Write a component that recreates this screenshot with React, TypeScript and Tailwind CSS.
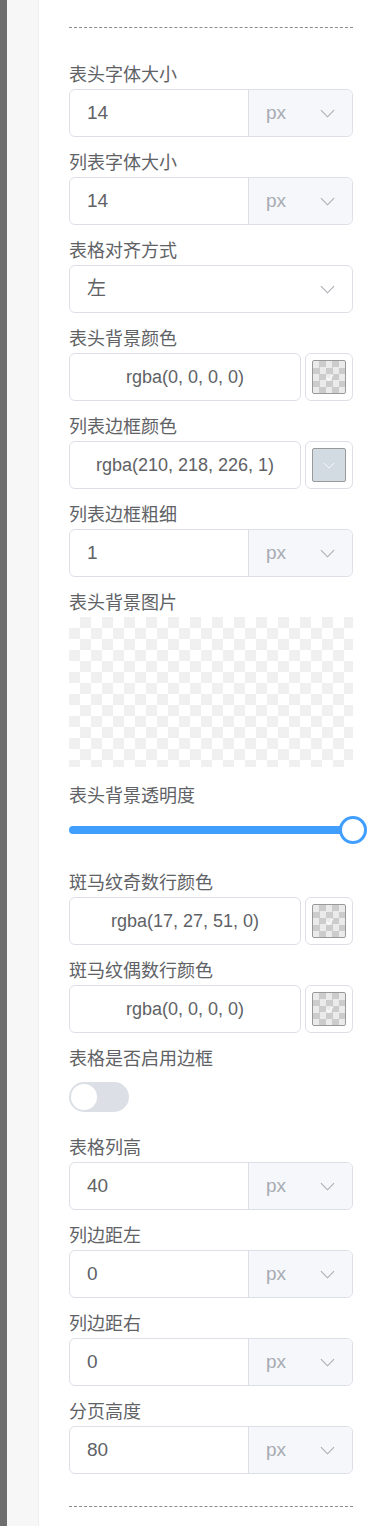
import React from "react";

const font = "font-['Liberation_Sans','Noto_Sans_CJK_SC',sans-serif]";

function Chevron({ className = "" }: { className?: string }) {
  return (
    <svg viewBox="0 0 16 9" className={className} fill="none" stroke="currentColor" strokeWidth="1.1">
      <polyline points="1,1 8,8 15,1" />
    </svg>
  );
}

function Label({ children }: { children: React.ReactNode }) {
  return <div className="h-[22px] leading-[22px] text-[18px] text-[#606266]">{children}</div>;
}

function Field({ label, children, mb = "mb-[15px]" }: { label: string; children: React.ReactNode; mb?: string }) {
  return (
    <div className={mb}>
      <Label>{label}</Label>
      <div className="mt-[3px]">{children}</div>
    </div>
  );
}

function UnitInput({ value }: { value: string }) {
  return (
    <div className="flex h-[48px] rounded-[6px] border border-[#dcdfe6]">
      <div className="w-[179px] flex items-center pl-[17px] text-[19px] text-[#606266] border-r border-[#dcdfe6]">
        {value}
      </div>
      <div className="flex-1 flex items-center justify-between pl-[17px] pr-[17px] bg-[#f5f7fa] rounded-r-[6px] text-[19px] text-[#a8abb2]">
        <span>px</span>
        <Chevron className="w-[15px] h-[9px] text-[#a8abb2]" />
      </div>
    </div>
  );
}

function ColorInput({ value, color }: { value: string; color?: string }) {
  return (
    <div className="flex gap-[4px]">
      <div className="flex-1 h-[48px] rounded-[6px] border border-[#dcdfe6] flex items-center justify-center text-[18px] text-[#606266]">
        {value}
      </div>
      <div className="w-[48px] h-[48px] rounded-[6px] border border-[#dcdfe6] flex items-center justify-center">
        {color ? (
          <div className="w-[34px] h-[34px] rounded-[2px] border border-[#999999] bg-[rgb(210,218,226)] flex items-center justify-center">
            <Chevron className="w-[12px] h-[7px] text-white" />
          </div>
        ) : (
          <div className="w-[34px] h-[34px] rounded-[2px] border border-[#999999] bg-[conic-gradient(#cccccc_25%,#ebebeb_0_50%,#cccccc_0_75%,#ebebeb_0)] bg-size-[13px_13px] flex items-center justify-center">
            <svg viewBox="0 0 10 8" className="w-[9px] h-[7px]" fill="none" stroke="white" strokeWidth="1.2">
              <polyline points="1,4 4,7 9,1" />
            </svg>
          </div>
        )}
      </div>
    </div>
  );
}

export default function App() {
  return (
    <div className={`flex min-h-[1526px] ${font}`}>
      <div className="w-[7px] shrink-0 bg-[#6e6e6e]" />
      <div className="w-[32px] shrink-0 bg-[#f7f7f7] border-r border-[#efefef]" />
      <div className="flex-1 flex flex-col bg-white pl-[30px] pr-[31px] pt-[27px]">
        <div className="border-t border-dashed border-[#8c8c8c]" />
        <div className="mt-[36px] flex flex-col">
          <Field label="表头字体大小">
            <UnitInput value="14" />
          </Field>
          <Field label="列表字体大小">
            <UnitInput value="14" />
          </Field>
          <Field label="表格对齐方式">
            <div className="h-[48px] rounded-[6px] border border-[#dcdfe6] flex items-center justify-between pl-[17px] pr-[17px]">
              <span className="text-[19px] text-[#606266]">左</span>
              <Chevron className="w-[15px] h-[9px] text-[#a8abb2]" />
            </div>
          </Field>
          <Field label="表头背景颜色">
            <ColorInput value="rgba(0, 0, 0, 0)" />
          </Field>
          <Field label="列表边框颜色">
            <ColorInput value="rgba(210, 218, 226, 1)" color="rgb(210,218,226)" />
          </Field>
          <Field label="列表边框粗细">
            <UnitInput value="1" />
          </Field>
          <Field label="表头背景图片" mb="mb-[18px]">
            <div className="h-[150px] bg-[conic-gradient(#f0f0f0_25%,#ffffff_0_50%,#f0f0f0_0_75%,#ffffff_0)] bg-size-[22px_22px]" />
          </Field>
          <Field label="表头背景透明度" mb="mb-[22px]">
            <div className="relative h-[40px] flex items-center">
              <div className="w-full h-[8px] rounded-full bg-[#409eff]" />
              <div className="absolute right-[-14px] top-[6px] w-[28px] h-[28px] rounded-full border-[3px] border-[#409eff] bg-white" />
            </div>
          </Field>
          <Field label="斑马纹奇数行颜色">
            <ColorInput value="rgba(17, 27, 51, 0)" />
          </Field>
          <Field label="斑马纹偶数行颜色">
            <ColorInput value="rgba(0, 0, 0, 0)" />
          </Field>
          <div className="mb-[25px]">
            <Label>表格是否启用边框</Label>
            <div className="mt-[12px] w-[60px] h-[30px] rounded-full bg-[#dcdfe6] p-[2px]">
              <div className="w-[26px] h-[26px] rounded-full bg-white" />
            </div>
          </div>
          <Field label="表格列高">
            <UnitInput value="40" />
          </Field>
          <Field label="列边距左">
            <UnitInput value="0" />
          </Field>
          <Field label="列边距右">
            <UnitInput value="0" />
          </Field>
          <Field label="分页高度">
            <UnitInput value="80" />
          </Field>
        </div>
        <div className="mt-[17px] border-t border-dashed border-[#8c8c8c]" />
      </div>
    </div>
  );
}
